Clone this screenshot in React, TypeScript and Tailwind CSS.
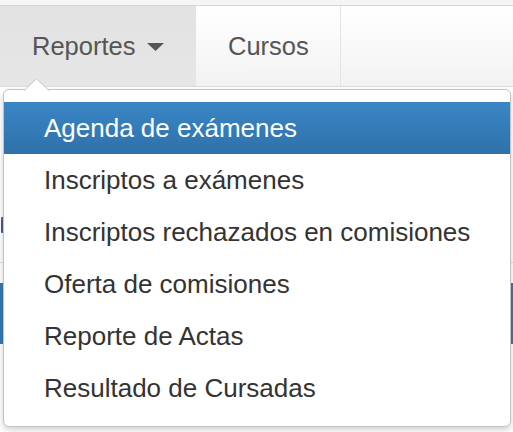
import * as React from "react";

const items = [
  "Agenda de exámenes",
  "Inscriptos a exámenes",
  "Inscriptos rechazados en comisiones",
  "Oferta de comisiones",
  "Reporte de Actas",
  "Resultado de Cursadas",
];

export default function App() {
  return (
    <div className="relative h-[432px] w-[513px] overflow-hidden bg-white font-['Liberation_Sans',Arial,sans-serif]">
      {/* top strip */}
      <div className="h-[6px] border-b border-[#d5d5d5] bg-[#f5f5f5]" />

      {/* navbar */}
      <nav className="flex h-[81px] border-b border-[#dcdcdc] bg-gradient-to-b from-white to-[#f2f2f2]">
        <div className="flex w-[196px] items-center bg-gradient-to-b from-[#e2e2e2] to-[#e6e6e6] pl-[32px] text-[25.5px] text-[#555]">
          Reportes
          <svg className="ml-[12px] mt-[2px]" width="17" height="8" viewBox="0 0 17 8">
            <path d="M0 0 H17 L8.5 8 Z" fill="#555" />
          </svg>
        </div>
        <div className="flex w-[145px] items-center border-r border-[#e4e4e4] pl-[32px] text-[25.5px] text-[#555]">
          Cursos
        </div>
      </nav>

      {/* page content behind the menu (mostly hidden) */}
      <div className="pt-[130px]">
        <div className="ml-[1px] h-[16px] w-[3px] rounded-[1px] bg-[#4a5a9a]" />
        <div className="mt-[29px] border-t border-[#ddd]" />
        <div className="mt-[20px] h-[61px] bg-[#337ab7]" />
      </div>

      {/* dropdown */}
      <div className="absolute left-[3px] top-[89px] w-[508px] rounded-[6px] border border-[#c4c4c4] bg-white py-[12px] shadow-[0_3px_6px_rgba(0,0,0,0.18)]">
        <svg className="absolute left-[19px] top-[-12px]" width="28" height="13" viewBox="0 0 28 13">
          <path d="M0.5 13 L13.5 0.7 L26.5 13" fill="white" stroke="#c4c4c4" strokeWidth="1" />
        </svg>
        <ul>
          {items.map((t, i) => (
            <li
              key={t}
              className={`flex h-[52px] items-center pl-[40px] text-[26px] ${
                i === 0
                  ? "bg-gradient-to-b from-[#3a86c6] to-[#2f71aa] text-white"
                  : "text-[#333]"
              }`}
            >
              {t}
            </li>
          ))}
        </ul>
      </div>
    </div>
  );
}
